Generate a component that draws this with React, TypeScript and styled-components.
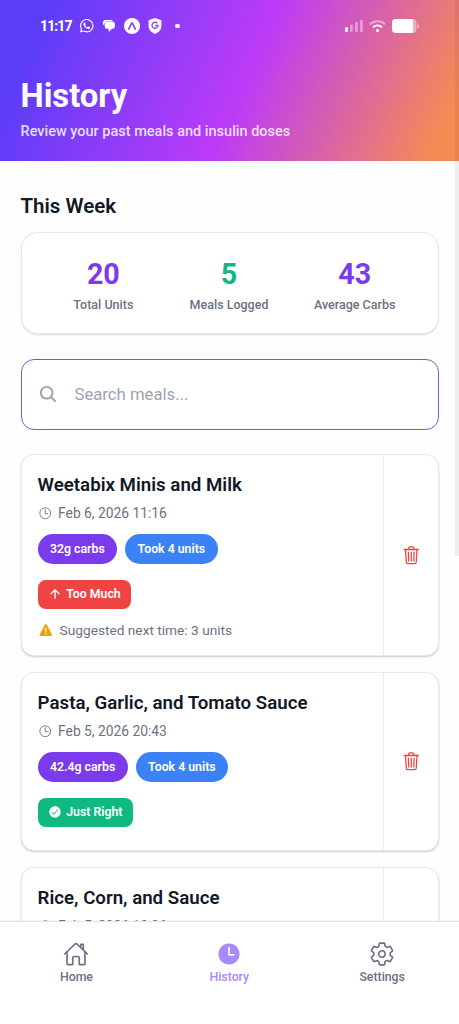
import React from "react";
import styled, { createGlobalStyle } from "styled-components";
import {
  IoArrowUp,
  IoCheckmarkCircle,
  IoHomeOutline,
  IoLogoWhatsapp,
  IoSearch,
  IoSettingsOutline,
  IoTime,
  IoTimeOutline,
  IoTrashOutline,
  IoWarning,
} from "react-icons/io5";

const GlobalStyle = createGlobalStyle`
  * { box-sizing: border-box; }
  html, body { margin: 0; padding: 0; background: #fff; }
  body { font-family: Roboto, "Liberation Sans", sans-serif; overflow: hidden; }
  svg { display: block; flex: none; }
`;

const Screen = styled.div`
  position: relative;
  display: flex;
  flex-direction: column;
  height: 1024px;
  overflow: hidden;
  background: #fefefe;
`;

const Header = styled.header`
  flex: none;
  height: 160.5px;
  background: linear-gradient(114deg, #5b3df8 9%, #bd3bf7 53.5%, #f58c53 94.5%);
  color: #fff;
`;

const StatusBar = styled.div`
  display: flex;
  justify-content: space-between;
  align-items: center;
  height: 52px;
  padding: 0 40px;
`;

const StatusGroup = styled.div<{ $gap: number }>`
  display: flex;
  align-items: center;
  gap: ${(p) => p.$gap}px;
`;

const Clock = styled.span`
  width: 30.5px;
  font-size: 14px;
  letter-spacing: -0.9px;
  font-weight: 700;
  white-space: nowrap;
`;

const Title = styled.h1`
  margin: 24px 0 0 20.5px;
  font-size: 32.8px;
  line-height: 40px;
  font-weight: 700;
`;

const Subtitle = styled.p`
  margin: 5px 0 0 20.5px;
  font-size: 14.5px;
  line-height: 21px;
  font-weight: 500;
  color: rgba(255, 255, 255, 0.84);
`;

const Content = styled.main`
  flex: 1;
  min-height: 0;
  overflow: hidden;
  padding: 33.5px 20.5px 0 20.5px;
`;

const SectionTitle = styled.h2`
  margin: 0 0 12px;
  font-size: 20.5px;
  line-height: 25px;
  font-weight: 600;
  color: #111827;
`;

const StatsCard = styled.section`
  display: flex;
  height: 102px;
  padding: 24px 20px 0 19px;
  margin-top: 13px;
  border: 1px solid #e8e9eb;
  border-radius: 17px;
  background: #fff;
  box-shadow: 0 1px 2px rgba(0, 0, 0, 0.14);
`;

const Stat = styled.div`
  flex: 1;
  text-align: center;
`;

const StatValue = styled.div<{ $color: string }>`
  font-size: 28.7px;
  line-height: 34px;
  font-weight: 700;
  color: ${(p) => p.$color};
`;

const StatLabel = styled.div`
  margin-top: 6px;
  font-size: 12.5px;
  line-height: 16px;
  font-weight: 500;
  color: #6b7280;
`;

const SearchBox = styled.label`
  display: flex;
  align-items: center;
  gap: 16.5px;
  height: 70.5px;
  margin: 25px 0 24.5px;
  padding: 0 17px 0 16.5px;
  border: 1px solid #8650e2;
  border-radius: 13px;
  background: #fff;
  color: #9ca3af;
`;

const SearchInput = styled.input`
  flex: 1;
  min-width: 0;
  padding: 0;
  border: 0;
  outline: 0;
  background: transparent;
  font: 400 16.7px Roboto, sans-serif;
  color: #111827;
  &::placeholder { color: #9ca3af; opacity: 1; }
`;

const MealCard = styled.article<{ $height: number }>`
  display: flex;
  height: ${(p) => p.$height}px;
  margin-bottom: 16.5px;
  border: 1px solid #e8e9eb;
  border-radius: 13px;
  background: #fff;
  box-shadow: 0 1px 2px rgba(0, 0, 0, 0.2);
`;

const MealBody = styled.div`
  flex: 1;
  padding: 18px 0 0 16.1px;
`;

const MealName = styled.h3`
  margin: 0;
  font-size: 18.7px;
  line-height: 24px;
  font-weight: 600;
  color: #111827;
`;

const MealDate = styled.div`
  display: flex;
  align-items: center;
  gap: 6px;
  margin-top: 6px;
  font-size: 13.8px;
  line-height: 20px;
  color: #6b7280;
`;

const Pills = styled.div`
  display: flex;
  gap: 8px;
  margin-top: 11px;
`;

const Pill = styled.span<{ $color: string }>`
  height: 29.5px;
  padding: 0 12.4px;
  border-radius: 15px;
  background: ${(p) => p.$color};
  color: #fff;
  font-size: 12.3px;
  line-height: 30px;
  font-weight: 600;
`;

const Verdict = styled.div<{ $color: string }>`
  display: flex;
  align-items: center;
  gap: 4px;
  width: fit-content;
  height: 29.5px;
  margin-top: 16px;
  padding: 0 10.5px 0 10.6px;
  border-radius: 8px;
  background: ${(p) => p.$color};
  color: #fff;
  font-size: 12.3px;
  font-weight: 600;
`;

const Suggestion = styled.div`
  display: flex;
  align-items: center;
  gap: 6px;
  margin-top: 10.5px;
  font-size: 13.7px;
  line-height: 20px;
  color: #6b7280;
  svg { color: #f59e0b; }
`;

const DeleteButton = styled.button`
  display: flex;
  align-items: center;
  justify-content: center;
  width: 54.5px;
  padding: 0;
  border: 0;
  border-left: 1px solid #ecedef;
  background: transparent;
  color: #ef4444;
`;

const TabBar = styled.nav`
  flex: none;
  display: flex;
  height: 103px;
  padding: 19px 0.4px 0 0;
  border-top: 1px solid #e3e4e6;
  background: #fff;
  box-shadow: 0 -1px 1px rgba(0, 0, 0, 0.03);
`;

const Tab = styled.a<{ $active?: boolean }>`
  flex: 1;
  display: flex;
  flex-direction: column;
  align-items: center;
  gap: 2px;
  color: ${(p) => (p.$active ? "#a78bfa" : "#6b7280")};
  font-size: 12.3px;
  line-height: 16px;
  font-weight: 500;
`;

const ScrollThumb = styled.div`
  position: absolute;
  top: 0;
  right: 0;
  width: 4px;
  height: 556px;
  background: rgba(0, 0, 0, 0.06);
`;

const ChatIcon = () => (
  <svg width="14" height="14" viewBox="0 0 14 14" fill="#fff">
    <path d="M3.500 1h5a3 3 0 0 1 2.600 1.300H5.300A3.200 3.200 0 0 0 2.300 6.500 3 3 0 0 1 .8 4 3 3 0 0 1 3.500 1Z" />
    <path d="M5.800 2.600h4.200a2.900 2.900 0 0 1 2.900 2.900v1.400A2.900 2.900 0 0 1 10 9.800L6.700 13V9.800H5.800A2.900 2.900 0 0 1 2.700 6.900V5.500a2.900 2.900 0 0 1 3.100-2.900Z" />
  </svg>
);

const ExpoIcon = () => (
  <svg width="16" height="16" viewBox="0 0 16 16" fill="none">
    <circle cx="8" cy="8" r="8" fill="#fff" />
    <path d="M4.800 11 7.300 5.600q.7-1 1.400 0L11.200 11" stroke="#8a3bf5" strokeWidth="1.700" strokeLinecap="round" />
  </svg>
);

const ShieldIcon = () => (
  <svg width="14" height="16" viewBox="0 0 14 16" fill="none">
    <path d="M7 0 13.400 2.200v5.600c0 3.700-2.700 6.700-6.400 8.100C3.300 14.500.6 11.500.6 7.800V2.200Z" fill="#fff" />
    <path d="M9.300 5.300A3 3 0 1 0 10 7.500H7.200" stroke="#933bf5" strokeWidth="1.300" />
  </svg>
);

const DotIcon = styled.span`
  width: 4.5px;
  height: 4.5px;
  margin-left: 5px;
  border-radius: 50%;
  background: #fff;
`;

const SignalIcon = () => (
  <svg width="18" height="14" viewBox="0 0 18 14" fill="#fff">
    <rect x="0" y="8" width="3" height="5" rx="1.300" />
    <rect x="5" y="5.500" width="2.800" height="7.500" rx="1" opacity=".4" />
    <rect x="10" y="3" width="2.800" height="10" rx="1" opacity=".4" />
    <rect x="15" y="1" width="2.800" height="12" rx="1" opacity=".4" />
  </svg>
);

const WifiIcon = () => (
  <svg width="17" height="14" viewBox="0 0 17 14" fill="none" stroke="#fff" strokeWidth="2">
    <path d="M1 5.200a11 11 0 0 1 15 0" opacity=".45" />
    <path d="M4 8.300a6.800 6.800 0 0 1 9 0" />
    <circle cx="8.500" cy="11.500" r="1.500" fill="#fff" stroke="none" />
  </svg>
);

const BatteryIcon = () => (
  <svg width="27" height="14" viewBox="0 0 27 14" fill="#fff">
    <rect x="0" y="0" width="24.500" height="14" rx="4" opacity=".45" />
    <path d="M4 0h17v14H4a4 4 0 0 1-4-4V4a4 4 0 0 1 4-4Z" />
    <path d="M25.500 4.500q1.500.5 1.500 2.500t-1.500 2.500Z" opacity=".5" />
  </svg>
);

type Meal = {
  name: string;
  date: string;
  carbs?: string;
  dose?: string;
  verdict?: "high" | "right";
  suggestion?: string;
  height: number;
};

const meals: Meal[] = [
  { name: "Weetabix Minis and Milk", date: "Feb 6, 2026 11:16", carbs: "32g carbs", dose: "Took 4 units", verdict: "high", suggestion: "Suggested next time: 3 units", height: 201.5 },
  { name: "Pasta, Garlic, and Tomato Sauce", date: "Feb 5, 2026 20:43", carbs: "42.4g carbs", dose: "Took 4 units", verdict: "right", height: 178.5 },
  { name: "Rice, Corn, and Sauce", date: "Feb 5, 2026 13:06", height: 178.5 },
];

export default function App() {
  return (
    <>
      <GlobalStyle />
      <Screen>
        <Header>
          <StatusBar>
            <StatusGroup $gap={8}>
              <Clock>11:17</Clock>
              <IoLogoWhatsapp size={15.5} />
              <ChatIcon />
              <ExpoIcon />
              <ShieldIcon />
              <DotIcon />
            </StatusGroup>
            <StatusGroup $gap={6}>
              <SignalIcon />
              <WifiIcon />
              <BatteryIcon />
            </StatusGroup>
          </StatusBar>
          <Title>History</Title>
          <Subtitle>Review your past meals and insulin doses</Subtitle>
        </Header>
        <Content>
          <SectionTitle>This Week</SectionTitle>
          <StatsCard>
            <Stat>
              <StatValue $color="#7c3aed">20</StatValue>
              <StatLabel>Total Units</StatLabel>
            </Stat>
            <Stat>
              <StatValue $color="#10b981">5</StatValue>
              <StatLabel>Meals Logged</StatLabel>
            </Stat>
            <Stat>
              <StatValue $color="#7c3aed">43</StatValue>
              <StatLabel>Average Carbs</StatLabel>
            </Stat>
          </StatsCard>
          <SearchBox>
            <IoSearch size={20} />
            <SearchInput placeholder="Search meals..." />
          </SearchBox>
          {meals.map((meal) => (
            <MealCard key={meal.name} $height={meal.height}>
              <MealBody>
                <MealName>{meal.name}</MealName>
                <MealDate>
                  <IoTimeOutline size={14.5} />
                  {meal.date}
                </MealDate>
                {meal.carbs && (
                  <Pills>
                    <Pill $color="#7c3aed">{meal.carbs}</Pill>
                    <Pill $color="#3b82f6">{meal.dose}</Pill>
                  </Pills>
                )}
                {meal.verdict === "high" && (
                  <Verdict $color="#ef4444">
                    <IoArrowUp size={14} />
                    Too Much
                  </Verdict>
                )}
                {meal.verdict === "right" && (
                  <Verdict $color="#10b981">
                    <IoCheckmarkCircle size={14} />
                    Just Right
                  </Verdict>
                )}
                {meal.suggestion && (
                  <Suggestion>
                    <IoWarning size={16} />
                    {meal.suggestion}
                  </Suggestion>
                )}
              </MealBody>
              <DeleteButton aria-label="Delete meal">
                <IoTrashOutline size={20.5} />
              </DeleteButton>
            </MealCard>
          ))}
        </Content>
        <TabBar>
          <Tab><IoHomeOutline size={26} />Home</Tab>
          <Tab $active><IoTime size={26} />History</Tab>
          <Tab><IoSettingsOutline size={26} />Settings</Tab>
        </TabBar>
        <ScrollThumb />
      </Screen>
    </>
  );
}
